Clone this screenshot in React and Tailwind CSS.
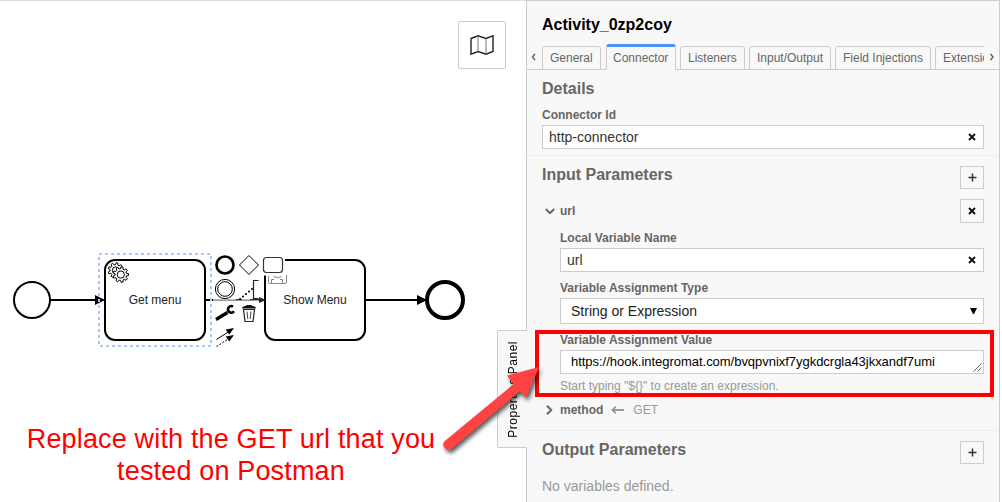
import React from "react";

function gearPath(cx, cy, outer, inner, teeth) {
  const step = (Math.PI * 2) / teeth;
  const points = [];
  for (let i = 0; i < teeth; i++) {
    const a = i * step;
    [
      [a - step * 0.32, inner],
      [a - step * 0.18, outer],
      [a + step * 0.18, outer],
      [a + step * 0.32, inner],
    ].forEach(([t, r]) =>
      points.push(`${(cx + Math.cos(t) * r).toFixed(2)} ${(cy + Math.sin(t) * r).toFixed(2)}`)
    );
  }
  return `M${points.join("L")}Z`;
}

function Diagram() {
  return (
    <svg
      className="absolute -top-px left-0 font-['Liberation_Sans',Arial,sans-serif]"
      width="526"
      height="501"
      viewBox="0 0 526 501"
      fill="none"
      stroke="#000"
    >
      {/* start event */}
      <circle cx="32" cy="300" r="18" strokeWidth="2" />
      <path d="M50 300H98" strokeWidth="2" />

      {/* flow between the tasks */}
      <path d="M206 300H213" strokeWidth="2" />
      <path d="M213 300.2H260" stroke="#777" strokeWidth="1.2" />
      <path d="M236 299.5H242M250 299.5H260" stroke="#333" />

      {/* tasks */}
      <rect x="105" y="260" width="100" height="80" rx="10" strokeWidth="2" fill="#fff" />
      <rect x="265" y="260" width="100" height="80" rx="10" strokeWidth="2" fill="#fff" />
      <path d="M95 295L105 300L95 305Z" fill="#000" stroke="none" />
      <path d="M259 297L266 300L259 303Z" fill="#222" stroke="none" />
      <g strokeWidth="1" fill="#fff">
        <path d={gearPath(115.7, 270.3, 7.6, 5.6, 9)} />
        <circle cx="115.7" cy="270.3" r="3.4" />
        <path d={gearPath(120.8, 274.6, 7.8, 5.8, 9)} />
        <circle cx="120.8" cy="274.6" r="3.6" />
      </g>
      <g fill="#222" stroke="none" fontSize="12" textAnchor="middle">
        <text x="155" y="304">Get menu</text>
        <text x="315" y="304">Show Menu</text>
      </g>
      <rect x="99" y="254" width="112" height="92" stroke="#a6c8ff" strokeWidth="2" strokeDasharray="3 3" />

      {/* end event */}
      <path d="M365 300H420" strokeWidth="2" />
      <path d="M417 295L427 300L417 305Z" fill="#000" stroke="none" />
      <circle cx="445" cy="300" r="18" strokeWidth="4" />

      {/* context pad */}
      <path d="M262 255H285V275.5H262Z" fill="#fff" stroke="none" />
      <circle cx="225" cy="265" r="8.5" strokeWidth="2.7" fill="#fff" />
      <path d="M249 255.5L258.5 265L249 274.5L239.5 265Z" strokeWidth="1" />
      <rect x="263.5" y="257.5" width="19" height="15" rx="3" stroke="#333" strokeWidth="1.2" />
      <g stroke="#888" strokeWidth="1">
        <path d="M268.5 276V282Q268.5 283.5 270 283.5H285Q286.5 283.5 286.5 282V275" />
        <path d="M271.5 283V279.5H274M282.5 283V279.5H280M273.500 276.500Q277.500 279 281.500 276.500" />
      </g>
      <circle cx="225" cy="289" r="9.6" strokeWidth="1" fill="#fff" />
      <circle cx="225" cy="289" r="7.3" strokeWidth="1" />
      <path d="M240 299L252 289" strokeWidth="2" strokeLinecap="round" strokeDasharray="0.1 3.8" />
      <path d="M258.500 280.500H253.500V298.500H258.500" stroke="#222" strokeWidth="1.2" />
      <path d="M216 319.500L227.500 312.500" strokeWidth="3.300" />
      <path d="M233 306.600A3.300 3.300 0 1 0 234 311.300" strokeWidth="2.600" />
      <g strokeWidth="1">
        <path d="M243.500 309.500H254.500L253 321.500H245Z" stroke="#222" strokeWidth="1.2" />
        <path d="M247 311.500L247.800 319M251 311.500L250.200 319" stroke="#444" />
        <path d="M242 308.500Q242 306.500 245.500 306L247 305H251L252.500 306Q256 306.500 256 308.500Z" fill="#111" stroke="none" />
        <path d="M216.500 339.500L229 331.500" />
        <path d="M216.500 346.500L229 338.500" strokeDasharray="2 1.5" />
        <path d="M234 328L225.700 329.500L229.300 334.500Z" fill="#000" stroke="none" />
        <path d="M234 335L225.700 336.500L229.300 341.500Z" fill="#000" stroke="none" />
      </g>
    </svg>
  );
}

function Cross() {
  return (
    <svg width="8" height="8" viewBox="0 0 8 8" stroke="#111" strokeWidth="1.9">
      <path d="M1 1L7 7M7 1L1 7" />
    </svg>
  );
}

function SquareButton({ kind }) {
  return (
    <button
      className={`flex w-6 shrink-0 items-center justify-center border border-[#ccc] bg-[#f8f8f8] ${
        kind === "add" ? "h-[23px]" : "h-6"
      }`}
    >
      {kind === "add" ? (
        <svg width="9" height="9" viewBox="0 0 9 9" stroke="#333" strokeWidth="1.5">
          <path d="M4.5 0.5V8.5M0.5 4.5H8.5" />
        </svg>
      ) : (
        <Cross />
      )}
    </button>
  );
}

function TextField({ value }) {
  return (
    <div className="flex h-6 items-center justify-between border border-[#ccc] bg-white pl-1.5 pr-[7px] text-sm leading-[22px] text-[#333]">
      <span>{value}</span>
      <Cross />
    </div>
  );
}

function Label({ children }) {
  return <div className="h-4 text-xs font-bold leading-4">{children}</div>;
}

const tabs = [
  { name: "General", size: "w-[59px] mr-px pl-[7px]" },
  { name: "Connector", size: "w-[70px] pl-1.5", active: true },
  { name: "Listeners", size: "w-[65px] pl-[7px]" },
  { name: "Input/Output", size: "w-[82px] pl-[7px]" },
  { name: "Field Injections", size: "w-24 pl-[7px]" },
  { name: "Extensions", size: "w-[76px] pl-[7px]" },
];

function Tabs() {
  return (
    <div className="flex h-[26px] items-end">
      <div className="flex h-[26px] w-[15px] shrink-0 items-center border-b border-[#ccc] pl-1">
        <svg width="6" height="8" viewBox="0 0 6 8" fill="none" stroke="#555" strokeWidth="1.3">
          <path d="M4 0.8L1.5 4L4 7.2" />
        </svg>
      </div>
      <div className="relative flex h-[26px] w-[442px] items-end gap-1 overflow-hidden">
        <div className="absolute bottom-0 left-0 h-px w-full bg-[#ccc]" />
        {tabs.map((t) => (
          <div
            key={t.name}
            className={`relative shrink-0 whitespace-nowrap rounded-t-[3px] border-x border-[#ccc] text-xs ${t.size} ${
              t.active
                ? "h-[26px] border-t-[3px] border-t-[#4d90ff] bg-[#f8f8f8] leading-[23px]"
                : "h-6 border-y leading-[22px]"
            }`}
          >
            {t.name}
          </div>
        ))}
      </div>
      <div className="flex h-[26px] w-[15px] shrink-0 items-center border-b border-[#ccc] pl-[5px]">
        <svg width="6" height="8" viewBox="0 0 6 8" fill="none" stroke="#555" strokeWidth="1.3">
          <path d="M1.5 0.8L4 4L1.5 7.2" />
        </svg>
      </div>
    </div>
  );
}

function Panel() {
  return (
    <aside className="h-[502px] w-[474px] shrink-0 border-x border-t border-[#ccc] bg-[#f8f8f8] text-[#666]">
      <h1 className="h-[43px] pl-[15px] pt-[14px] text-base font-bold leading-5 text-black">Activity_0zp2coy</h1>
      <Tabs />
      <section className="h-[86px] border-b border-[#eee] px-[15px] pt-[9px]">
        <h2 className="text-base font-bold leading-5">Details</h2>
        <div className="h-[26px] pt-2">
          <Label>Connector Id</Label>
        </div>
        <TextField value="http-connector" />
      </section>
      <section className="h-[275px] border-b border-[#eee] px-[15px]">
        <div className="flex h-[33px] justify-between pt-[10px]">
          <h2 className="-mt-px text-base font-bold leading-5">Input Parameters</h2>
          <SquareButton kind="add" />
        </div>
        <div className="mt-[10px] flex items-center justify-between">
          <div className="flex items-center gap-[5px] pl-[3px] text-xs font-bold">
            <svg width="10" height="7" viewBox="0 0 10 7" fill="none" stroke="#666" strokeWidth="2">
              <path d="M0.8 1L5 5.2L9.2 1" />
            </svg>
            <span>url</span>
          </div>
          <SquareButton kind="remove" />
        </div>
        <div className="pl-[18px]">
          <div className="h-[25px] pt-[7px]">
            <Label>Local Variable Name</Label>
          </div>
          <TextField value="url" />
          <div className="h-[26px] pt-2">
            <Label>Variable Assignment Type</Label>
          </div>
          <div className="flex h-[26px] items-center justify-between border border-[#ccc] bg-white pl-[10px] pr-1.5 text-sm text-[#222]">
            <span>String or Expression</span>
            <svg width="7" height="6" viewBox="0 0 7 6">
              <path d="M0 0H7L4 6H3Z" fill="#000" />
            </svg>
          </div>
          <div className="h-[26px] pt-2">
            <Label>Variable Assignment Value</Label>
          </div>
          <div className="flex h-6 items-end justify-between border border-[#ccc] bg-white pl-[10px] pr-px text-[13px] leading-[22px] tracking-[-0.03px] text-black">
            <span>https://hook.integromat.com/bvqpvnixf7ygkdcrgla43jkxandf7umi</span>
            <svg width="9" height="9" viewBox="0 0 9 9" className="mb-px" stroke="#555" strokeWidth="0.9">
              <path d="M0.5 8.5L8.5 0.5M4.5 8.5L8.5 4.5" />
            </svg>
          </div>
          <p className="mt-1 text-xs leading-4 text-[#999]">{'Start typing "${}" to create an expression.'}</p>
        </div>
        <div className="mt-2 flex items-center pl-1 text-xs leading-4">
          <svg width="7" height="10" viewBox="0 0 7 10" fill="none" stroke="#666" strokeWidth="2">
            <path d="M1 0.8L5.2 5L1 9.2" />
          </svg>
          <span className="ml-[7px] font-bold">method</span>
          <svg width="13" height="8" viewBox="0 0 13 8" fill="none" stroke="#999" strokeWidth="1.8" className="ml-2">
            <path d="M1 4H13M4.8 0.7L1.2 4L4.8 7.3" />
          </svg>
          <span className="ml-[9px] text-[#999]">GET</span>
        </div>
      </section>
      <section className="px-[15px]">
        <div className="flex h-[33px] justify-between pt-[10px]">
          <h2 className="-mt-px text-base font-bold leading-5">Output Parameters</h2>
          <SquareButton kind="add" />
        </div>
        <p className="mt-3 text-sm leading-5 text-[#999]">No variables defined.</p>
      </section>
    </aside>
  );
}

export default function App() {
  return (
    <div className="relative flex h-[502px] w-[1002px] overflow-hidden bg-white font-['Liberation_Sans',Arial,sans-serif]">
      <main className="relative h-[502px] w-[526px] shrink-0 border-t border-[#ddd]">
        <Diagram />
        <button className="absolute left-[458px] top-5 flex h-12 w-12 items-center justify-center rounded-[2px] border border-[#ccc] bg-white">
          <svg width="24" height="20" viewBox="0 0 24 20" fill="none" stroke="#222" strokeWidth="1.4">
            <path d="M1 3.5L8 0.8L16 3.5L23 0.8V16.5L16 19.2L8 16.5L1 19.2Z" />
            <path d="M8 1V16.5M16 3.5V19" stroke="#777" strokeWidth="1" />
          </svg>
        </button>
      </main>
      <Panel />
      <div className="absolute left-[497px] top-[330px] flex h-[118px] w-[30px] items-center justify-center rounded-l-[2px] border border-r-0 border-[#ccc] bg-[#f8f8f8]">
        <span className="rotate-180 whitespace-nowrap text-xs tracking-[0.5px] text-black [writing-mode:vertical-rl]">
          Properties Panel
        </span>
      </div>
      <div className="absolute left-[535px] top-[330px] h-[67px] w-[459px] border-4 border-[#f00]" />
      <p className="absolute left-[11px] top-[423px] w-[440px] whitespace-nowrap text-center text-[27px] leading-8 tracking-[0.16px] text-[#f00]">
        Replace with the GET url that you
        <br />
        tested on Postman
      </p>
      <svg
        className="absolute left-[430px] top-[355px] drop-shadow-[2px_3px_2px_rgba(0,0,0,0.65)]"
        width="120"
        height="105"
        viewBox="430 355 120 105"
      >
        <path
          d="M444.500 441.200L513.500 384.200L507 375.500L539 367L526 398L520 391L451.500 449A5.300 5.300 0 0 1 444.500 441.200Z"
          fill="#ff4343"
        />
      </svg>
    </div>
  );
}
